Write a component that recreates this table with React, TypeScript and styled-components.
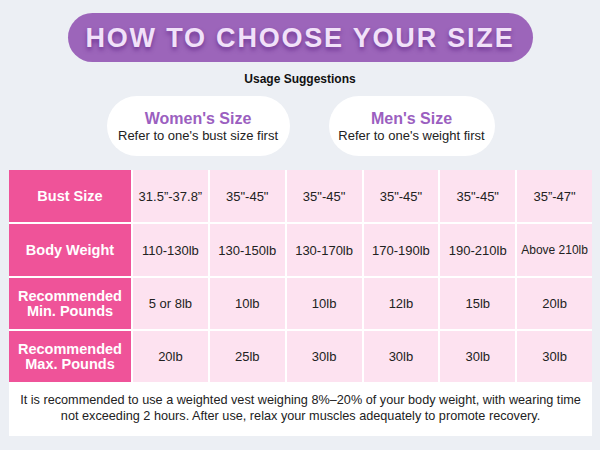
import React from "react";
import styled, { createGlobalStyle } from "styled-components";

const Global = createGlobalStyle`
  html, body { margin: 0; padding: 0; }
  body { background: #eceff4; font-family: "Liberation Sans", Arial, sans-serif; }
`;

const Page = styled.div`
  width: 600px;
  height: 450px;
  background: #eceff4;
  display: flex;
  flex-direction: column;
  align-items: center;
  padding-top: 13px;
  box-sizing: border-box;
  overflow: hidden;
`;

const TitlePill = styled.div`
  width: 465px;
  height: 49px;
  border-radius: 25px;
  background: #9c65ba;
  display: flex;
  align-items: center;
  justify-content: center;
  color: #f1e1f9;
  font-weight: 700;
  font-size: 27px;
  letter-spacing: 1.8px;
  text-shadow: 0 3px 4px rgba(80, 20, 120, 0.55);
  padding-top: 1px;
  box-sizing: border-box;
`;

const Subheading = styled.div`
  margin-top: 10px;
  font-size: 12px;
  font-weight: 700;
  color: #111;
  line-height: 14px;
`;

const PillRow = styled.div`
  display: flex;
  gap: 39px;
  margin-top: 10px;
  margin-left: 1px;
`;

const InfoPill = styled.div<{ $w: number }>`
  width: ${(p) => p.$w}px;
  height: 60px;
  border-radius: 30px;
  background: #ffffff;
  display: flex;
  flex-direction: column;
  align-items: center;
  justify-content: center;
  padding-top: 2px;
  box-sizing: border-box;
`;

const PillTitle = styled.div`
  color: #9b5fc0;
  font-weight: 700;
  font-size: 16px;
  line-height: 18px;
`;

const PillText = styled.div`
  color: #222;
  font-size: 13px;
  line-height: 16px;
`;

const Sheet = styled.div`
  align-self: flex-start;
  margin-left: 9px;
  margin-top: 14px;
  width: 583px;
  display: flex;
  flex-direction: column;
`;

const Grid = styled.div`
  display: grid;
  grid-template-columns: 122px repeat(6, 1fr);
  grid-template-rows: 52px 52px 51px 51px;
  gap: 2px;
  background: #ffffff;
`;

const HeadCell = styled.div`
  background: #ef5399;
  color: #ffffff;
  font-weight: 700;
  font-size: 14.5px;
  line-height: 15px;
  display: flex;
  align-items: center;
  justify-content: center;
  text-align: center;
`;

const Cell = styled.div<{ $small?: boolean }>`
  background: #fde2f0;
  color: #222;
  font-size: ${(p) => (p.$small ? "12px" : "13px")};
  display: flex;
  align-items: center;
  justify-content: center;
  text-align: center;
`;

const Footer = styled.div`
  background: #ffffff;
  height: 54px;
  display: flex;
  align-items: center;
  justify-content: center;
  text-align: center;
  color: #222;
  font-size: 12.7px;
  line-height: 16px;
  padding-bottom: 2px;
  box-sizing: border-box;
`;

const rows: { head: React.ReactNode; cells: string[] }[] = [
  { head: "Bust Size", cells: ["31.5\u201D-37.8\u201D", "35\"-45\"", "35\"-45\"", "35\"-45\"", "35\"-45\"", "35\u201D-47\""] },
  { head: "Body Weight", cells: ["110-130lb", "130-150lb", "130-170lb", "170-190lb", "190-210lb", "Above 210lb"] },
  { head: <>Recommended<br />Min. Pounds</>, cells: ["5 or 8lb", "10lb", "10lb", "12lb", "15lb", "20lb"] },
  { head: <>Recommended<br />Max. Pounds</>, cells: ["20lb", "25lb", "30lb", "30lb", "30lb", "30lb"] },
];

export default function App() {
  return (
    <>
      <Global />
      <Page>
        <TitlePill>HOW TO CHOOSE YOUR SIZE</TitlePill>
        <Subheading>Usage Suggestions</Subheading>
        <PillRow>
          <InfoPill $w={183}>
            <PillTitle>Women's Size</PillTitle>
            <PillText>Refer to one's bust size first</PillText>
          </InfoPill>
          <InfoPill $w={166}>
            <PillTitle>Men's Size</PillTitle>
            <PillText>Refer to one's weight first</PillText>
          </InfoPill>
        </PillRow>
        <Sheet>
          <Grid>
            {rows.map((r, i) => (
              <React.Fragment key={i}>
                <HeadCell>{r.head}</HeadCell>
                {r.cells.map((c, j) => (
                  <Cell key={j} $small={c.startsWith("Above")}>{c}</Cell>
                ))}
              </React.Fragment>
            ))}
          </Grid>
          <Footer>
            It is recommended to use a weighted vest weighing 8%–20% of your body weight, with wearing time
            <br />
            not exceeding 2 hours. After use, relax your muscles adequately to promote recovery.
          </Footer>
        </Sheet>
      </Page>
    </>
  );
}
